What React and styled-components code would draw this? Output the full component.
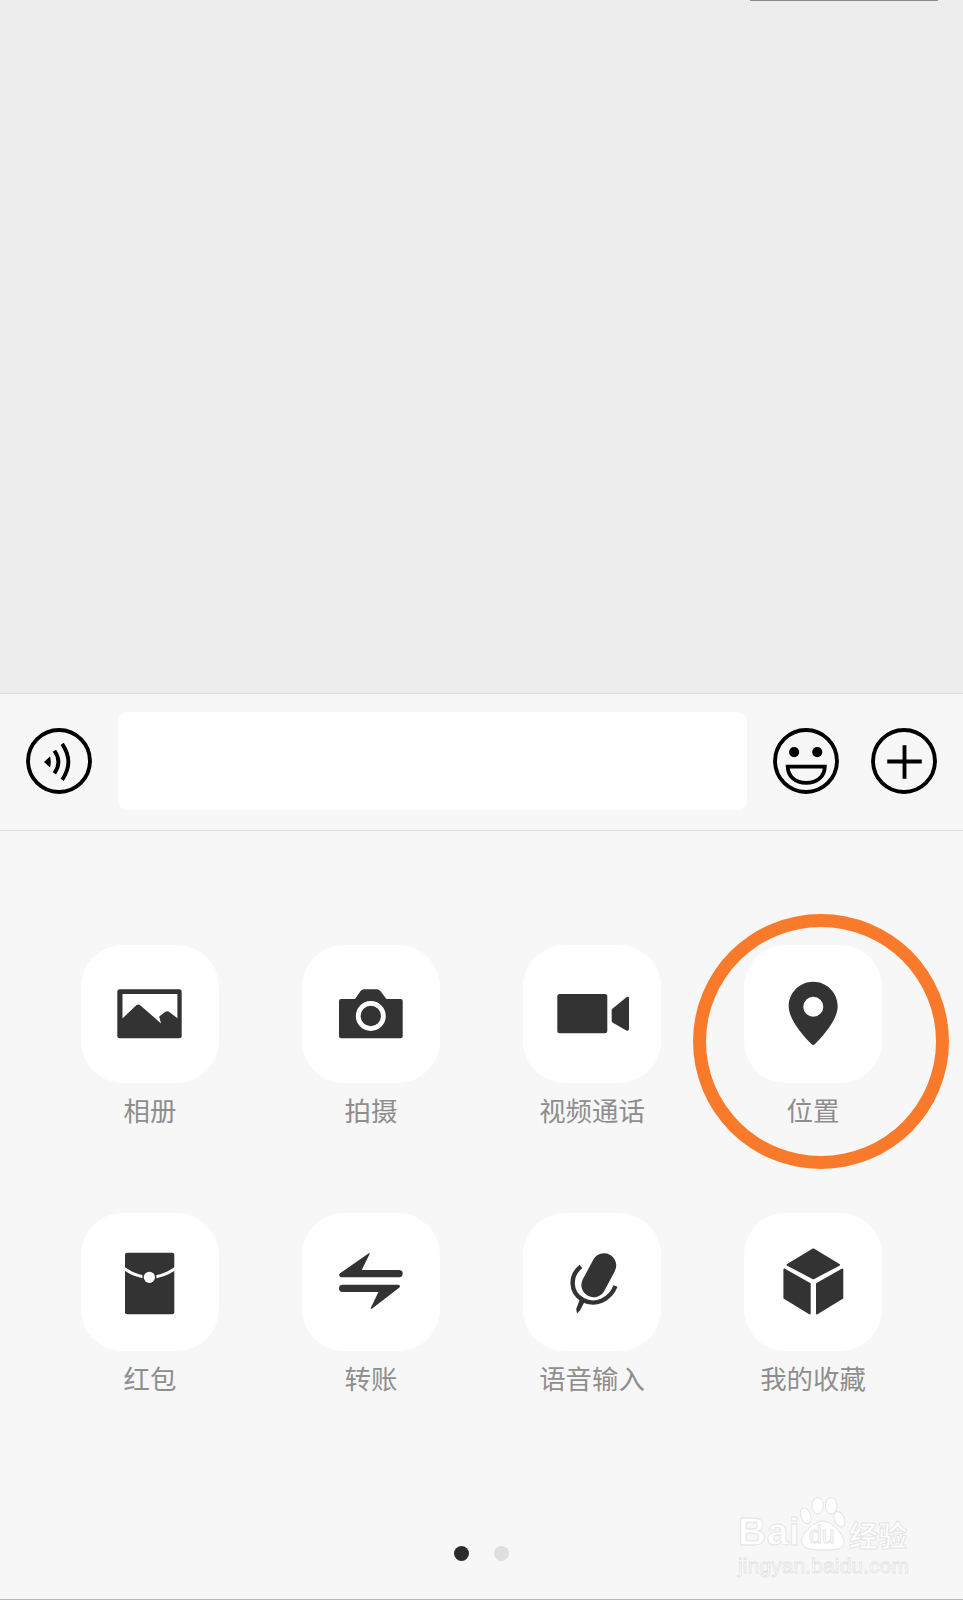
import React from 'react';
import styled, { createGlobalStyle } from 'styled-components';

const GlobalStyle = createGlobalStyle`
  body {
    margin: 0;
    background: #f7f7f7;
    font-family: "Noto Sans CJK SC", "Noto Sans", sans-serif;
  }
`;

const DARK = '#333333';

const AlbumIcon = () => (
  <TileSvg viewBox="0 0 138 138">
    <rect x="36.3" y="44.3" width="64.4" height="49" rx="2.5" fill={DARK} />
    <path
      d="M41.5 49H96.4V73.2L88.6 67.2Q86.3 65.4 84 67L78.2 71.4L80 78.4L59.5 60.4Q57.4 58.6 55.3 60.2L41.5 73.4Z"
      fill="#fff"
    />
  </TileSvg>
);

const CameraIcon = () => (
  <TileSvg viewBox="0 0 138 138">
    <path
      d="M39 54H53L58.6 46Q60 44.3 62 44.3H75Q77 44.3 78.4 46L84.4 54H98.7Q100.7 54 100.7 56V91.3Q100.7 93.3 98.7 93.3H39Q37 93.3 37 91.3V56Q37 54 39 54Z"
      fill={DARK}
    />
    <circle cx="68.8" cy="71" r="12.6" fill="none" stroke="#fff" strokeWidth="4.8" />
  </TileSvg>
);

const VideoIcon = () => (
  <TileSvg viewBox="0 0 138 138">
    <rect x="34.3" y="49" width="50" height="39.3" rx="2.5" fill={DARK} />
    <path
      d="M88.7 65.2Q88.7 64.4 89.4 63.8L103.4 52.2Q106 50.6 106 53.4V83.6Q106 86.6 103.4 85.4L89.4 77.4Q88.7 76.9 88.7 76Z"
      fill={DARK}
    />
  </TileSvg>
);

const PinIcon = () => (
  <TileSvg viewBox="0 0 138 138">
    <path
      fillRule="evenodd"
      d="M69.2 36.7C55.7 36.7 44.7 47.7 44.7 61.2C44.7 75 60 91.5 67.6 99.3Q69.2 100.8 70.8 99.3C78.4 91.5 93.7 75 93.7 61.2C93.7 47.7 82.7 36.7 69.2 36.7ZM69.3 51.7A10 10 0 1 1 69.3 71.7A10 10 0 1 1 69.3 51.7Z"
      fill={DARK}
    />
  </TileSvg>
);

const PacketIcon = () => (
  <TileSvg viewBox="0 0 138 138">
    <rect x="44" y="39.7" width="49.3" height="61.6" rx="2" fill={DARK} />
    <path d="M42 54.8Q54 63.8 68.6 64.6Q83 63.8 95.3 54.8" fill="none" stroke="#fff" strokeWidth="3" />
    <circle cx="68.4" cy="64.3" r="7" fill={DARK} />
    <circle cx="68.4" cy="64.3" r="5.6" fill="#fff" />
  </TileSvg>
);

const TransferIcon = () => (
  <TileSvg viewBox="0 0 138 138">
    <path
      d="M66.4 40.6Q68 39.2 67.6 41L59.8 57H97.2Q100.7 57 100.7 60.6Q100.7 64.3 97.2 64.3H39.5Q36 63.6 37.6 60.6Z"
      fill={DARK}
    />
    <path
      d="M40.5 71.7H96Q99 72 97.4 74.6L70.2 95.6Q68.4 96.8 68.8 95L76.4 79H40.5Q37 79 37 75.3Q37 71.7 40.5 71.7Z"
      fill={DARK}
    />
  </TileSvg>
);

const MicIcon = () => (
  <TileSvg viewBox="0 0 138 138">
    <line x1="81" y1="52.5" x2="70.6" y2="72" stroke={DARK} strokeWidth="24.4" strokeLinecap="round" />
    <path
      d="M58 53.5C47 62 46 79 60 87C72 93.5 87 87 92.5 73"
      fill="none"
      stroke={DARK}
      strokeWidth="4.4"
      strokeLinejoin="round"
    />
    <path d="M56.6 87L61.4 89L57 97.4L54 100.4L53.2 96Z" fill={DARK} />
  </TileSvg>
);

const CubeIcon = () => (
  <TileSvg viewBox="0 0 138 138">
    <g fill={DARK} stroke={DARK} strokeWidth="2" strokeLinejoin="round">
      <path d="M69.3 36.4L95 51.8L69.3 65.3L43.6 51.8Z" />
      <path d="M40.4 56.6L65.7 70.9V100.5L40.4 85Z" />
      <path d="M98.3 56.6L73 70.9V100.5L98.3 85Z" />
    </g>
  </TileSvg>
);

const VoiceButton = () => (
  <RoundIcon viewBox="0 0 65 65">
    <circle cx="32.5" cy="32.5" r="30.5" />
    <path d="M23.6 28L17.7 33.4L23.6 38.8Q25.2 33.4 23.6 28Z" fill="#000" stroke="none" />
    <path d="M28 22.4Q35.8 33.4 28 44.6" />
    <path d="M35.6 15.6Q47.8 33.4 35.6 51" />
  </RoundIcon>
);

const SmileButton = () => (
  <RoundIcon viewBox="0 0 65 65">
    <circle cx="32.5" cy="32.5" r="30.5" />
    <circle cx="20.8" cy="23.7" r="5" fill="#000" stroke="none" />
    <circle cx="43.6" cy="23.7" r="5" fill="#000" stroke="none" />
    <path d="M14.5 38H51C51 47.6 43.6 54 32.7 54C22 54 14.5 47.6 14.5 38Z" />
  </RoundIcon>
);

const PlusButton = () => (
  <RoundIcon viewBox="0 0 65 65">
    <circle cx="32.5" cy="32.5" r="30.5" />
    <path d="M16 33H50M33 17V50" />
  </RoundIcon>
);

const PawIcon = () => (
  <PawSvg viewBox="0 0 46 56">
    <g fill="#fff" stroke="#e2e2e2" strokeWidth="1">
      <ellipse cx="17.5" cy="9" rx="6" ry="8.5" />
      <ellipse cx="31.5" cy="9" rx="6" ry="8.5" />
      <ellipse cx="5" cy="19.5" rx="5" ry="8.5" transform="rotate(-20 5 19.5)" />
      <ellipse cx="40" cy="23" rx="5" ry="8.5" transform="rotate(-25 40 23)" />
      <path d="M23 25C32 25 45 39 45 47C45 54 36 55 23 55C10 55 1 54 1 45C1 37 14 25 23 25Z" />
    </g>
  </PawSvg>
);

const items = [
  { label: '相册', Icon: AlbumIcon },
  { label: '拍摄', Icon: CameraIcon },
  { label: '视频通话', Icon: VideoIcon },
  { label: '位置', Icon: PinIcon },
  { label: '红包', Icon: PacketIcon },
  { label: '转账', Icon: TransferIcon },
  { label: '语音输入', Icon: MicIcon },
  { label: '我的收藏', Icon: CubeIcon },
];

export default function App() {
  return (
    <Page>
      <GlobalStyle />
      <ChatArea>
        <TopLine />
      </ChatArea>
      <InputBar>
        <VoiceButton />
        <TextBox />
        <SmileButton />
        <PlusSlot>
          <PlusButton />
        </PlusSlot>
      </InputBar>
      <Panel>
        <Grid>
          {items.map(({ label, Icon }) => (
            <Item key={label}>
              <Tile>
                <Icon />
              </Tile>
              <Label>{label}</Label>
            </Item>
          ))}
        </Grid>
        <Pager>
          <Dot $active />
          <Dot />
        </Pager>
      </Panel>
      <Ring />
      <Watermark>
        <BrandRow>
          <Bai>Bai</Bai>
          <PawWrap>
            <PawIcon />
            <Du>du</Du>
          </PawWrap>
          <Jingyan>经验</Jingyan>
        </BrandRow>
        <Domain>jingyan.baidu.com</Domain>
      </Watermark>
    </Page>
  );
}

const Page = styled.div`
  position: relative;
  width: 963px;
  height: 1600px;
  overflow: hidden;
`;

const ChatArea = styled.div`
  height: 693px;
  background: #ededed;
`;

const TopLine = styled.div`
  width: 188px;
  height: 1px;
  margin-left: 750px;
  background: #8a8a8a;
`;

const InputBar = styled.div`
  box-sizing: border-box;
  display: flex;
  align-items: center;
  gap: 26px;
  height: 138px;
  padding: 0 0 2px 26px;
  background: #f7f7f7;
  border-top: 1px solid #dcdcdc;
  border-bottom: 1px solid #dcdcdc;
`;

const TextBox = styled.div`
  width: 629px;
  height: 98px;
  background: #fff;
  border-radius: 9px;
`;

const RoundIcon = styled.svg`
  display: block;
  width: 66px;
  height: 66px;
  flex: none;
  fill: none;
  stroke: #000;
  stroke-width: 3.8;
`;

const PlusSlot = styled.div`
  margin-left: 6px;
`;

const Panel = styled.div`
  box-sizing: border-box;
  height: 769px;
  padding: 114px 0 0 81px;
  background: #f7f7f7;
  border-bottom: 1px solid #b5b5b5;
`;

const Grid = styled.div`
  display: grid;
  grid-template-columns: repeat(4, 138px);
  grid-auto-rows: 268px;
  column-gap: 83px;
`;

const Item = styled.div`
  display: flex;
  flex-direction: column;
  align-items: center;
`;

const Tile = styled.div`
  width: 138px;
  height: 138px;
  background: #fff;
  border-radius: 42px;
`;

const TileSvg = styled.svg`
  display: block;
  width: 138px;
  height: 138px;
`;

const Label = styled.div`
  margin-top: 12px;
  font-size: 26.4px;
  line-height: 30px;
  color: #8e8e8e;
  white-space: nowrap;
`;

const Pager = styled.div`
  display: flex;
  justify-content: center;
  gap: 25px;
  margin: 65px 0 0 -81px;
`;

const Dot = styled.span`
  width: 15px;
  height: 15px;
  border-radius: 50%;
  background: ${(p) => (p.$active ? '#2b2b2b' : '#dedede')};
`;

const Ring = styled.div`
  position: absolute;
  left: 693px;
  top: 914px;
  box-sizing: border-box;
  width: 256px;
  height: 255px;
  border: 13.5px solid #f97a2b;
  border-radius: 50%;
`;

const Watermark = styled.div`
  position: absolute;
  left: 738px;
  top: 1497px;
  width: 174px;
  display: flex;
  flex-direction: column;
  font-family: "Liberation Sans", "Noto Sans CJK SC", sans-serif;
  color: #fff;
  -webkit-text-stroke: 0.8px #e2e2e2;
`;

const BrandRow = styled.div`
  display: flex;
  align-items: flex-end;
  height: 54px;
`;

const Bai = styled.span`
  width: 62px;
  font-size: 39px;
  font-weight: 700;
  line-height: 39px;
  letter-spacing: 0.5px;
`;

const PawWrap = styled.div`
  position: relative;
  width: 46px;
  height: 54px;
  margin-right: 3px;
`;

const PawSvg = styled.svg`
  display: block;
  width: 46px;
  height: 54px;
`;

const Du = styled.span`
  position: absolute;
  left: 9px;
  bottom: 2px;
  font-size: 23px;
  line-height: 28px;
`;

const Jingyan = styled.span`
  font-size: 29px;
  font-weight: 700;
  line-height: 34px;
  font-family: "Noto Sans CJK SC", sans-serif;
`;

const Domain = styled.div`
  margin-top: 3px;
  font-size: 20.8px;
  line-height: 24px;
  letter-spacing: 0.2px;
  white-space: nowrap;
`;
